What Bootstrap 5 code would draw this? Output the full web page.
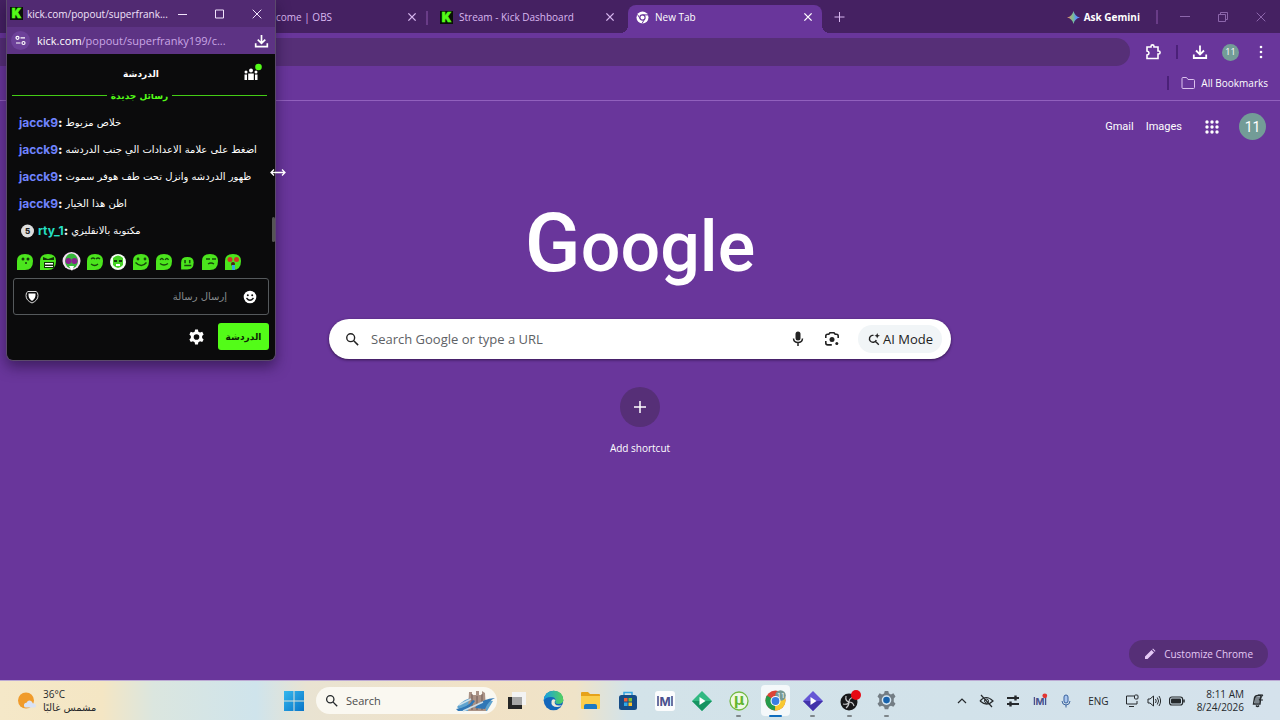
<!DOCTYPE html>
<html lang="en">
<head>
<meta charset="utf-8">
<meta name="viewport" content="width=device-width, initial-scale=1">
<title>New Tab</title>
<link href="https://cdn.jsdelivr.net/npm/bootstrap@5.3.0/dist/css/bootstrap.min.css" rel="stylesheet">
<style>
  :root { --violet:#69369b; --strip:#452162; --field:#562f77; --lilac:#d9b8f0; }
  body { font-family:"Noto Sans","DejaVu Sans",sans-serif; font-size:10px; line-height:16px; background:var(--violet); color:#fff; overflow:hidden; }
  svg { display:block; flex:none; }
  button { background:none; border:0; padding:0; color:inherit; line-height:inherit; }
  a { color:inherit; text-decoration:none; }
  .ui { font-family:"Open Sans","DejaVu Sans",sans-serif; }

  /* tab strip */
  .strip { background:var(--strip); height:33px; padding-left:276px; color:var(--lilac); }
  .tab-item { height:28px; width:194px; padding:0 8px; gap:6px; }
  .tab-first { width:150px; padding-left:0; }
  .tab-mid { width:200px; padding:0 12px; }
  .tab-item.on { background:var(--violet); color:#fff; border-radius:8px 8px 0 0; position:relative; }
  .tab-item.on::before, .tab-item.on::after { content:""; position:absolute; bottom:0; width:8px; height:8px; }
  .tab-item.on::before { right:100%; background:radial-gradient(circle at 0 0, transparent 8px, var(--violet) 8px); }
  .tab-item.on::after { left:100%; background:radial-gradient(circle at 100% 0, transparent 8px, var(--violet) 8px); }
  .sep { width:2px; height:14px; background:#693c87; }
  .sep.deep { background:#4b2178; }
  .caption-set { gap:28px; padding:0 14px 0 22px; color:#8c66ab; }

  /* toolbar and bookmarks */
  .toolbar { height:38px; padding:0 15px 0 0; gap:14px; }
  .omni { height:28px; border:0; background:var(--field); border-radius:0 14px 14px 0; color:#fff; padding:0 12px 0 290px; outline:0; }
  .round { border-radius:50%; background:#739c97; color:#fff; display:flex; align-items:center; justify-content:center; }
  .avatar-s { width:17px; height:17px; font-size:9px; }
  .avatar-l { width:27px; height:27px; font-size:14px; font-family:Roboto,sans-serif; }
  .bookmarks { height:30px; gap:12px; padding:0 12px 6px; border-bottom:1px solid #9160bd; }
  .bookmarks a { gap:6px; }

  /* page */
  .ntp { padding:12px; }
  .account { gap:12px; padding-right:2px; font-family:Roboto,sans-serif; font-size:11px; }
  .grid-btn { margin:0 6px 0 9px; }
  .wordmark { font-family:Roboto,sans-serif; font-weight:500; font-size:70px; line-height:80px; margin:63px 0 0; }
  .wordmark::first-letter { font-size:82px; }
  .searchbox { width:622px; max-width:100%; height:40px; border-radius:20px; background:#fff; margin-top:32px; padding:0 9px 0 16px; color:#222; box-shadow:0 1px 3px #35164f; }
  .searchbox input { border:0; outline:0; background:none; font-size:13px; min-width:0; padding:0 0 0 12px; }
  .searchbox input::placeholder { color:#5d6165; opacity:1; }
  .search-tools { gap:18px; margin-right:18px; }
  .ai { height:28px; border-radius:14px; background:#f1f5f7; padding:0 9px; gap:3px; font-size:13px; }
  .plus { width:40px; height:40px; border-radius:50%; background:var(--field); }
  .shortcut { margin-top:28px; gap:13px; }
  .custom { background:var(--field); border-radius:14px; height:28px; padding:0 15px; gap:8px; color:#e5c9f5; }

  /* chat window */
  .popout { position:absolute; left:6px; top:0; width:270px; height:361px; background:#0b0b0c; border:1px solid #5b4a6b; border-top:0; border-radius:0 0 7px 7px; box-shadow:0 6px 14px rgba(20,5,40,.5); }
  .pop-title { height:27px; background:#512a72; padding:0 13px 0 3px; gap:4px; color:#f1e3fb; }
  .pop-buttons { gap:28px; }
  .pop-url { height:27px; background:#5d3384; padding:0 6px 0 4px; gap:7px; font-size:11px; color:#c9a6e4; }
  .site { width:19px; height:19px; border-radius:50%; background:#6d4199; display:flex; align-items:center; justify-content:center; }
  .chat-head { height:40px; padding:0 15px; }
  .newmsg { height:15px; overflow:hidden; padding:0 8px 0 5px; gap:4px; color:#53fc18; line-height:5px; }
  .newmsg hr { margin:1px 0 0; border:0; height:1px; background:#53fc18; opacity:.8; }
  .chat-list { height:139px; padding:0 12px; position:relative; }
  .msg { height:27px; gap:3px; }
  .nick { font-family:Inter,sans-serif; font-weight:700; font-size:12px; color:#6f83ff; }
  .nick.teal { color:#25e0c6; }
  .nick b { color:#fff; }
  .arab { font-family:"DejaVu Sans",sans-serif; font-size:10px; white-space:nowrap; }
  .arab.strong { font-size:9px; font-weight:700; }
  .thumb { position:absolute; right:0; bottom:6px; width:3px; height:25px; background:#555; border-radius:2px; }
  .emotes { height:27px; padding:0 9px; gap:5px; }
  .composer { height:37px; margin:3px 6px 0; border:1px solid #55595c; border-radius:3px; padding:0 11px; gap:16px; }
  .composer input { background:none; border:0; outline:0; min-width:0; padding:0; color:#fff; }
  .composer input::placeholder { color:#878b8e; opacity:1; }
  .actions { gap:14px; padding-right:6px; }
  .send { background:#53fc18; color:#0b2503; height:27px; width:51px; border-radius:3px; }
  .cursor { position:absolute; left:263px; top:167px; }

  /* taskbar */
  .taskbar { height:40px; color:#25292c; border-top:1px solid #bca9d4; background:linear-gradient(90deg,#f5e8c8 0,#f4e6c4 8%,#dbe6df 12%,#cfe4ec 20%,#e9e3d2 24%,#f1e2c6 38%,#efe3c8 45%,#d3e3e9 49%,#d2e2ea 75%,#d5e2ec 100%); }
  .weather { width:275px; padding-left:17px; gap:6px; line-height:13px; }
  .apps .app { width:37px; height:36px; position:relative; display:flex; align-items:center; justify-content:center; }
  .app.run::after { content:""; position:absolute; bottom:2px; width:5px; height:2px; border-radius:1px; background:#7e868a; }
  .app.cur::after { width:13px; background:#0f6cbd; }
  .app.cur .plate { background:#f4f8fa; border-radius:4px; padding:5px 4px; }
  .find { width:181px; height:27px; border-radius:14px; background:#faf8f1; padding:0 0 0 9px; gap:8px; margin:0 1px 0 4px; }
  .find input { border:0; outline:0; background:none; min-width:0; padding:0; font-size:11px; }
  .find input::placeholder { color:#4a4b4b; opacity:1; }
  .tray { gap:12px; padding-right:16px; }
  .clock { line-height:13px; }
</style>
</head>
<body class="d-flex flex-column vh-100">
<svg width="0" height="0" class="position-absolute" aria-hidden="true">
  <defs>
    <symbol id="x" viewBox="0 0 10 10"><path d="M2 2l6 6M8 2l-6 6" stroke="currentColor" stroke-width="1.100"/></symbol>
    <symbol id="x-thin" viewBox="0 0 10 10"><path d="M.7.7l8.600 8.600M9.300 .7L.7 9.300" stroke="currentColor" stroke-width="1"/></symbol>
    <symbol id="down" viewBox="0 0 16 16"><path d="M8 1.500v8.500M4 6.500l4 4 4-4M1.800 10.500v3.500h12.400v-3.500" fill="none" stroke="currentColor" stroke-width="1.800"/></symbol>
    <symbol id="kick" viewBox="0 0 13 13"><rect width="13" height="13" fill="#081006"/><text x="6.500" y="11" text-anchor="middle" font-family="Inter" font-weight="900" font-size="12.500" fill="#53fc18" stroke="#53fc18" stroke-width=".7">K</text></symbol>
    <symbol id="lens" viewBox="0 0 16 16"><circle cx="6.500" cy="6.500" r="4.500" fill="none" stroke="currentColor" stroke-width="1.600"/><path d="M10 10l5 5" stroke="currentColor" stroke-width="1.700"/></symbol>
    <symbol id="mono" viewBox="0 0 20 20"><path d="M3 5v10M17 5v10" stroke="#48508d" stroke-width="1.600"/><text x="10" y="14.500" text-anchor="middle" font-family="Inter" font-weight="700" font-size="12" fill="#48508d">M</text></symbol>
    <symbol id="emote" viewBox="0 0 18 18"><path d="M1 17V8q0-7 8-7t8 7q0 9-8 9z" fill="#4be51d"/></symbol>
  </defs>
</svg>

<header class="ui">
  <div class="strip d-flex align-items-end">
    <div class="tab-item tab-first d-flex align-items-center pb-1"><span class="flex-grow-1">come | OBS</span><button aria-label="Close tab"><svg width="12" height="12"><use href="#x"/></svg></button></div>
    <span class="sep mb-2"></span>
    <div class="tab-item tab-mid d-flex align-items-center pb-1"><svg width="13" height="13"><use href="#kick"/></svg><span class="flex-grow-1 text-nowrap">Stream - Kick Dashboard</span><button aria-label="Close tab"><svg width="12" height="12"><use href="#x"/></svg></button></div>
    <div class="tab-item on d-flex align-items-center pb-1">
      <svg width="13" height="13" viewBox="0 0 13 13"><circle cx="6.500" cy="6.500" r="6" fill="#fff"/><circle cx="6.500" cy="6.500" r="2.600" fill="none" stroke="#69369b" stroke-width="1.100"/><path d="M6.500 3.900h5.500M4.200 7.800L1.500 3.500M8.800 7.800L6 12.500" stroke="#69369b"/></svg>
      <span class="flex-grow-1">New Tab</span><button aria-label="Close tab"><svg width="12" height="12"><use href="#x"/></svg></button>
    </div>
    <button class="mb-2 ms-2 ps-1" aria-label="New tab"><svg width="11" height="16" viewBox="0 0 11 16"><path d="M5.500 3v10M.5 8h10" stroke="currentColor"/></svg></button>
    <div class="d-flex align-items-center ms-auto mb-2">
      <button class="d-flex align-items-center gap-1 text-white fw-bold"><svg width="13" height="13" viewBox="0 0 13 13"><defs><linearGradient id="gem"><stop stop-color="#f0826e"/><stop offset=".45" stop-color="#7bc08e"/><stop offset=".7" stop-color="#5c93f7"/></linearGradient></defs><path d="M6.500 0q1.200 5.300 6.500 6.500Q7.700 7.700 6.500 13 5.300 7.700 0 6.500 5.300 5.300 6.500 0z" fill="url(#gem)"/></svg>Ask Gemini</button>
      <span class="sep ms-3"></span>
      <div class="caption-set d-flex align-items-center">
        <button aria-label="Minimize"><svg width="10" height="10" viewBox="0 0 10 10"><path d="M0 4.500h10" stroke="currentColor"/></svg></button>
        <button aria-label="Restore"><svg width="10" height="10" viewBox="0 0 10 10"><path d="M.5 2.500h7v7h-7zM2.500 2.500v-2h7v7h-2" fill="none" stroke="currentColor"/></svg></button>
        <button aria-label="Close"><svg width="10" height="10"><use href="#x-thin"/></svg></button>
      </div>
    </div>
  </div>
  <div class="toolbar d-flex align-items-center">
    <input class="omni flex-grow-1" aria-label="Address bar">
    <button aria-label="Extensions"><svg width="18" height="18" viewBox="0 0 18 18"><path d="M3 4h4v-.6a1.500 1.500 0 013 0V4h4v4h.6a1.500 1.500 0 010 3H14v4.500H3V12q2-.3 2-2t-2-2z" fill="none" stroke="currentColor" stroke-width="1.600"/></svg></button>
    <span class="sep deep"></span>
    <button aria-label="Downloads"><svg width="16" height="16"><use href="#down"/></svg></button>
    <button class="round avatar-s" aria-label="Profile">11</button>
    <button class="ps-1" aria-label="Menu"><svg width="8" height="16" viewBox="0 0 8 16"><g fill="#fff"><circle cx="4" cy="3" r="1.300"/><circle cx="4" cy="8" r="1.300"/><circle cx="4" cy="13" r="1.300"/></g></svg></button>
  </div>
  <div class="bookmarks d-flex align-items-center justify-content-end">
    <span class="sep deep"></span>
    <a href="#" class="d-flex align-items-center text-nowrap"><svg width="14" height="12" viewBox="0 0 14 12"><path d="M1 1.500q0-1 1-1h3.500l1.500 2h5.500q1 0 1 1v7q0 1-1 1H2q-1 0-1-1z" fill="none" stroke="#dcc1ee"/></svg>All Bookmarks</a>
  </div>
</header>

<main class="ntp flex-grow-1 d-flex flex-column">
  <nav class="account d-flex align-items-center justify-content-end">
    <a href="#">Gmail</a><a href="#">Images</a>
    <button aria-label="Google apps" class="grid-btn"><svg width="18" height="18" viewBox="0 0 18 18"><g fill="#fff"><circle cx="4" cy="4" r="1.700"/><circle cx="9" cy="4" r="1.700"/><circle cx="14" cy="4" r="1.700"/><circle cx="4" cy="9" r="1.700"/><circle cx="9" cy="9" r="1.700"/><circle cx="14" cy="9" r="1.700"/><circle cx="4" cy="14" r="1.700"/><circle cx="9" cy="14" r="1.700"/><circle cx="14" cy="14" r="1.700"/></g></svg></button>
    <button class="round avatar-l" aria-label="Account">11</button>
  </nav>
  <div class="d-flex flex-column align-items-center">
    <h1 class="wordmark">Google</h1>
    <div class="searchbox d-flex align-items-center">
      <svg width="14" height="14" viewBox="0 0 16 16"><use href="#lens"/></svg>
      <input class="flex-grow-1 ui" placeholder="Search Google or type a URL" aria-label="Search Google or type a URL">
      <div class="search-tools d-flex align-items-center">
        <button aria-label="Voice search"><svg width="16" height="18" viewBox="0 0 16 18"><rect x="5.500" y="1.500" width="5" height="9" rx="2.500" fill="#222"/><path d="M3.500 8.500q.3 4 4.500 4t4.500-4M8 12.500V16" fill="none" stroke="#222" stroke-width="1.500"/></svg></button>
        <button aria-label="Image search"><svg width="16" height="16" viewBox="0 0 16 16"><path d="M1.800 7V5q0-1.700 1.700-1.700h1.300L6 1.800h4l1.200 1.500h1.300q1.700 0 1.700 1.700v2M1.800 10v2q0 1.900 2 1.900h4" fill="none" stroke="#222" stroke-width="1.600"/><circle cx="8" cy="8.500" r="2.500" fill="#222"/><circle cx="12.800" cy="12.600" r="1.500" fill="#222"/></svg></button>
      </div>
      <button class="ai ui d-flex align-items-center text-nowrap"><svg width="13" height="13" viewBox="0 0 14 14"><path d="M7 2.500H5.500a3.800 3.800 0 104.500 5M8.700 8.700l4 4" fill="none" stroke="#222" stroke-width="1.500"/><path d="M11 0q.3 2.700 3 3-2.700.3-3 3-.3-2.700-3-3 2.700-.3 3-3z" fill="#222"/></svg>AI Mode</button>
    </div>
    <a href="#" class="shortcut ui d-flex flex-column align-items-center">
      <span class="plus d-flex align-items-center justify-content-center"><svg width="14" height="14" viewBox="0 0 14 14"><path d="M7 1v12M1 7h12" stroke="#fff" stroke-width="1.500"/></svg></span>
      Add shortcut
    </a>
  </div>
  <button class="custom ui d-flex align-items-center mt-auto ms-auto"><svg width="12" height="12" viewBox="0 0 12 12"><path d="M1 11V8.500L7.500 2 10 4.500 3.500 11zM8.300 1.200L9 .5l2.500 2.500-.7.700z" fill="currentColor"/></svg>Customize Chrome</button>
</main>

<footer class="taskbar ui d-flex align-items-center">
  <div class="weather d-flex align-items-center">
    <svg width="20" height="20" viewBox="0 0 20 20"><circle cx="9" cy="9.500" r="8" fill="#f09b2b"/><path d="M7 15q-.5-3 2.500-3.300Q11 9 13.500 9.800q2 .5 2.200 2.500Q19 12.500 19 15q0 1.500-2 1.500H9Q7 16.500 7 15z" fill="#d8e2f6"/></svg>
    <div><div>36°C</div><div class="arab" dir="rtl" lang="ar">مشمس غالبًا</div></div>
  </div>
  <div class="apps d-flex align-items-center">
    <button class="app" aria-label="Start"><svg width="20" height="20" viewBox="0 0 20 20"><defs><linearGradient id="win" x2="1" y2="1"><stop stop-color="#35b8ee"/><stop offset="1" stop-color="#0874c8"/></linearGradient></defs><path d="M0 0h9.500v9.500H0zM10.500 0H20v9.500h-9.500zM0 10.500h9.500V20H0zM10.500 10.500H20V20h-9.500z" fill="url(#win)"/></svg></button>
    <div class="find d-flex align-items-center">
      <svg width="13" height="13" viewBox="0 0 16 16"><use href="#lens"/></svg>
      <input class="flex-grow-1" placeholder="Search" aria-label="Search">
      <svg width="42" height="24" viewBox="0 0 42 24"><path d="M2 18Q10 8 20 9l18 3-6 10H6z" fill="#5fa3cf"/><path d="M14 3h3v3h4V2h3v4h3V2l3 2 1 18H13z" fill="#aa9285"/><path d="M17 5v16M22 7v14M27 5v16" stroke="#705d57"/><path d="M1 20Q12 19 18 11l2 1Q13 23 3 22zM20 19Q28 9 40 9q-7 3-10 11z" fill="#3077b6"/><path d="M4 16l12-6M8 22l20-9" stroke="#c9deea" stroke-width="1.500"/></svg>
    </div>
    <button class="app" aria-label="Task view"><svg width="20" height="20" viewBox="0 0 20 20"><path d="M5 1h14v13H5z" fill="#f3f3f3"/><path d="M1 6h14v12H1z" fill="#252525"/><path d="M5 6h10v8H5z" fill="#a6a6a6"/></svg></button>
    <button class="app" aria-label="Edge"><svg width="21" height="21" viewBox="0 0 21 21"><defs><linearGradient id="edge" x2="1"><stop stop-color="#159de5"/><stop offset="1" stop-color="#55d35b"/></linearGradient></defs><circle cx="10.500" cy="10.500" r="9.800" fill="#1467bb"/><path d="M.7 11Q1 1 11 .7q9 .3 9.300 9.300-.3 4-5 4-4-.2-2.800-3Q13 7 8 7 2 7 .7 11z" fill="url(#edge)"/><path d="M12.500 10q-3-2-4 1-1 6 6 6 3 0 4.500-2-5 1.500-7-1-1-2 .5-4z" fill="#f1ead7"/></svg></button>
    <button class="app" aria-label="File Explorer"><svg width="21" height="20" viewBox="0 0 21 20"><path d="M1 2q0-1 1-1h6l2 2h9q1 0 1 1v3H1z" fill="#e6a21a"/><path d="M1 5h19v12q0 1-1 1H2q-1 0-1-1z" fill="#fbce4c"/><path d="M4 18v-3q0-2 2-2h9q2 0 2 2v3z" fill="#1a79c4"/></svg></button>
    <button class="app" aria-label="Store"><svg width="20" height="20" viewBox="0 0 20 20"><path d="M6 5V1.500h8V5" fill="none" stroke="#35a5e3" stroke-width="1.500"/><rect x="1" y="4" width="18" height="15" rx="2.500" fill="#164c86"/><path d="M6 7h3.500v3.500H6z" fill="#f15b35"/><path d="M10.500 7H14v3.500h-3.500z" fill="#80bf38"/><path d="M6 11.500h3.500V15H6z" fill="#30a9e8"/><path d="M10.500 11.500H14V15h-3.500z" fill="#ffc229"/></svg></button>
    <button class="app" aria-label="Monitor"><svg width="20" height="20" viewBox="0 0 20 20"><rect width="20" height="20" rx="3" fill="#fbfcfd"/><use href="#mono"/></svg></button>
    <button class="app" aria-label="Player"><svg width="20" height="20" viewBox="0 0 20 20"><path d="M10 0l10 10-10 10L0 10z" fill="#31b982"/><path d="M10 20L0 10h20z" fill="#179462"/><path d="M7.500 6v8l6-4z" fill="#fff"/></svg></button>
    <button class="app run" aria-label="Torrent"><svg width="20" height="20" viewBox="0 0 20 20"><circle cx="10" cy="10" r="9" fill="#eff8e5" stroke="#72ba43" stroke-width="1.300"/><text x="10" y="14" text-anchor="middle" font-family="Inter" font-weight="700" font-size="16" fill="#63b62f">µ</text></svg></button>
    <button class="app run cur" aria-label="Chrome"><span class="plate"><svg width="21" height="21" viewBox="0 0 21 21"><circle cx="10.500" cy="10.500" r="10" fill="#dc4437"/><path d="M10.500 10.500L1.800 5.500A10 10 0 0010 20.500z" fill="#259b4b"/><path d="M10.500 10.500L10 20.500a10 10 0 0010-13z" fill="#f8c931"/><circle cx="15.500" cy="5.500" r="5.300" fill="#769994"/><circle cx="10.500" cy="11" r="5" fill="#fff"/><circle cx="10.500" cy="11" r="3.900" fill="#3a7ee3"/><text x="16" y="7.500" text-anchor="middle" font-family="Roboto" font-size="7" fill="#fff">11</text></svg></span></button>
    <button class="app run" aria-label="Clips"><svg width="20" height="20" viewBox="0 0 20 20"><path d="M10 0l10 10-10 10L0 10z" fill="#6556d5"/><path d="M10 20L0 10h20z" fill="#4333aa"/><path d="M7.500 6v8l6-4z" fill="#fff"/></svg></button>
    <button class="app run" aria-label="OBS"><svg width="24" height="24" viewBox="0 0 24 24"><circle cx="11" cy="13" r="8.500" fill="#17181a"/><g fill="none" stroke="#c7c9cb" stroke-width="1.200"><path d="M8 7q-1 5 3 6 4 0 5 4M16 8q-5 1-5 5M5 15q5 1 6-2M11 13q0 4-3 6"/></g><circle cx="18" cy="6" r="5" fill="#e70914"/></svg></button>
    <button class="app run" aria-label="Settings"><svg width="21" height="21" viewBox="0 0 24 24"><path d="M10 1h4l.8 3 2.300 1 2.800-1.200 2.400 3.500-2 2.400v3.600l2 2.400-2.400 3.500-2.800-1.200-2.300 1-.8 3h-4l-.8-3-2.300-1-2.800 1.200-2.400-3.500 2-2.400V9.700l-2-2.400 2.400-3.500L6.900 5l2.300-1z" fill="#737d84"/><circle cx="12" cy="11.500" r="5.500" fill="#d6e7f3"/><circle cx="12" cy="11.500" r="3.800" fill="#1763ad"/></svg></button>
  </div>
  <div class="tray d-flex align-items-center ms-auto">
    <button aria-label="Hidden icons"><svg width="10" height="14" viewBox="0 0 10 14"><path d="M1 9l4-4 4 4" fill="none" stroke="currentColor" stroke-width="1.200"/></svg></button>
    <svg width="15" height="14" viewBox="0 0 15 14"><path d="M1 7q6-7 13 0-6 6-13 0M2 1l11 12" fill="none" stroke="currentColor" stroke-width="1.200"/><circle cx="7.500" cy="7" r="2" fill="none" stroke="currentColor"/></svg>
    <svg width="14" height="14" viewBox="0 0 14 14"><path d="M1 4h12M1 10h12" stroke="currentColor" stroke-width="1.800"/><path d="M9.500 1.500v5M4.500 7.500v5" stroke="currentColor" stroke-width="2.400"/></svg>
    <svg width="16" height="16" viewBox="0 0 20 20"><use href="#mono"/><circle cx="16" cy="3.500" r="3" fill="#e33532"/></svg>
    <svg width="12" height="14" viewBox="0 0 12 14"><rect x="4" y="1" width="4" height="8" rx="2" fill="#a9c6ef" stroke="#38619d"/><path d="M2 7q.3 4 4 4t4-4M6 11v2.500" fill="none" stroke="#38619d"/></svg>
    <span class="mx-1">ENG</span>
    <div class="d-flex align-items-center gap-2">
      <svg width="14" height="14" viewBox="0 0 14 14"><path d="M9 2H1.500v8H12V7M4 12.500h5" fill="none" stroke="currentColor"/><rect x="9.500" y="1" width="3.500" height="4" rx="1" fill="none" stroke="currentColor"/></svg>
      <svg width="14" height="14" viewBox="0 0 14 14"><path d="M1 5v4h2l3.500 3V2L3 5zM8.500 5q1.500 2 0 4M10.300 3.500q2.500 3.500 0 7M12 2q3.200 5 0 10" fill="none" stroke="currentColor"/></svg>
      <svg width="16" height="14" viewBox="0 0 16 14"><rect x=".6" y="3" width="13" height="8" rx="2.200" fill="none" stroke="currentColor" stroke-width="1.200"/><rect x="2" y="4.500" width="10" height="5" rx="1" fill="currentColor"/><path d="M15 5.500v3" stroke="currentColor" stroke-width="1.500"/></svg>
    </div>
    <div class="d-flex align-items-center gap-2">
      <div class="clock text-end">8:11 AM<br>8/24/2026</div>
      <button aria-label="Notifications"><svg width="12" height="14" viewBox="0 0 12 14"><path d="M1.500 10l1-6q.5-2.500 3.500-2.500h3l-1 8.500zM4 11.500q1.500 2 3 0" fill="none" stroke="currentColor" stroke-width="1.400"/><path d="M3 4h6M3 6h5M3 8h5" stroke="currentColor"/><path d="M6 1h5L7 6h4" fill="none" stroke="currentColor"/></svg></button>
    </div>
  </div>
</footer>

<section class="popout d-flex flex-column" aria-label="Chat window">
  <div class="pop-title ui d-flex align-items-center"><svg width="13" height="13"><use href="#kick"/></svg><span class="flex-grow-1 text-nowrap">kick.com/popout/superfrank...</span>
    <div class="pop-buttons d-flex align-items-center">
      <button aria-label="Minimize"><svg width="9" height="10" viewBox="0 0 9 10"><path d="M0 5.500h9" stroke="currentColor"/></svg></button>
      <button aria-label="Maximize"><svg width="9" height="10" viewBox="0 0 9 10"><path d="M.5 1h8v8h-8z" fill="none" stroke="currentColor"/></svg></button>
      <button aria-label="Close"><svg width="10" height="10"><use href="#x-thin"/></svg></button>
    </div>
  </div>
  <div class="pop-url ui d-flex align-items-center"><span class="site"><svg width="11" height="11" viewBox="0 0 11 11"><g fill="none" stroke="#fff" stroke-width="1.200"><circle cx="2.500" cy="2.800" r="1.500"/><path d="M5.500 2.800H10M1 8h4.500"/><circle cx="8.500" cy="8" r="1.500"/></g></svg></span><span class="flex-grow-1 text-nowrap"><span class="text-white">kick.com</span>/popout/superfranky199/c...</span><button class="text-white" aria-label="Install"><svg width="15" height="16" viewBox="0 0 16 16"><use href="#down"/></svg></button></div>
  <div class="chat-head d-flex align-items-center justify-content-center position-relative">
    <span class="arab strong" dir="rtl" lang="ar">الدردشة</span>
    <button class="position-absolute end-0 me-2 pe-1" aria-label="Viewers"><svg width="20" height="22" viewBox="0 0 20 22"><g fill="#fff"><circle cx="3" cy="9" r="1.500"/><circle cx="8" cy="7.500" r="2"/><circle cx="13" cy="9" r="1.500"/><path d="M1.500 11.500H4V17H1.500zM5.200 10.500h5.600V17H5.200zM12 11.500h2.500V17H12z"/></g><circle cx="15.500" cy="4" r="3.300" fill="#53fc18"/></svg></button>
  </div>
  <div class="newmsg d-flex align-items-start"><hr class="flex-grow-1"><span class="arab strong" dir="rtl" lang="ar">رسائل جديدة</span><hr class="flex-grow-1"></div>
  <div class="chat-list">
    <div class="msg d-flex align-items-center"><span class="nick">jacck9<b>:</b></span><span class="arab" dir="rtl" lang="ar">خلاص مزبوط</span></div>
    <div class="msg d-flex align-items-center"><span class="nick">jacck9<b>:</b></span><span class="arab" dir="rtl" lang="ar">اضغط على علامة الاعدادات الي جنب الدردشه</span></div>
    <div class="msg d-flex align-items-center"><span class="nick">jacck9<b>:</b></span><span class="arab" dir="rtl" lang="ar">ظهور الدردشه وانزل تحت طف هوفر سموث</span></div>
    <div class="msg d-flex align-items-center"><span class="nick">jacck9<b>:</b></span><span class="arab" dir="rtl" lang="ar">اظن هذا الخيار</span></div>
    <div class="msg d-flex align-items-center"><svg width="16" height="14" viewBox="0 0 16 14"><circle cx="8.500" cy="7" r="6.500" fill="#dedede"/><text x="8.500" y="10" text-anchor="middle" font-family="Inter" font-weight="800" font-size="8" fill="#222">5</text></svg><span class="nick teal">rty_1<b>:</b></span><span class="arab" dir="rtl" lang="ar">مكتوبة بالانقليزي</span></div>
    <span class="thumb"></span>
  </div>
  <div class="emotes d-flex align-items-center">
    <svg width="18" height="18"><use href="#emote"/><g fill="#153b0b"><circle cx="7" cy="6" r="1.500"/><circle cx="12" cy="6" r="1.500"/><circle cx="10" cy="10" r="1"/></g></svg>
    <svg width="18" height="18"><use href="#emote"/><path d="M4 4l5 2 6-2v3H4zM5 9h10v6H5z" fill="#123308"/><path d="M6 10h8v1.500H6zM6 13h8v1H6z" fill="#fff"/></svg>
    <svg width="19" height="19" viewBox="0 0 19 19"><circle cx="9.500" cy="9" r="9" fill="#f4dff4"/><ellipse cx="9.500" cy="9" rx="6.500" ry="7.500" fill="#36b63b"/><circle cx="6.500" cy="9" r="3" fill="#892090"/><circle cx="12.500" cy="9" r="3" fill="#892090"/><path d="M7 14h5l-2 5z" fill="#fff"/></svg>
    <svg width="18" height="18"><use href="#emote"/><path d="M5 6q2-2 4 0M10 6q2-2 4 0M5 11q4 3 7 0" fill="none" stroke="#174b0a" stroke-width="1.300"/></svg>
    <svg width="18" height="18"><circle cx="9" cy="9" r="8" fill="#f6fff4"/><path d="M4 5q5-5 10 0v7q-5 6-10 0z" fill="#44d323"/><path d="M5 8h3M10 8h3" stroke="#153b0b" stroke-width="2"/><path d="M7 12h4" stroke="#fff" stroke-width="2"/></svg>
    <svg width="18" height="18"><use href="#emote"/><path d="M3.500 9.500q6 6 11 0" fill="none" stroke="#174b0a" stroke-width="1.500"/><circle cx="6" cy="6" r="1.400" fill="#174b0a"/><circle cx="13" cy="6" r="1.400" fill="#174b0a"/></svg>
    <svg width="18" height="18"><use href="#emote"/><path d="M5 7q2-3 3.500 0M10 7q2-3 3.500 0M5 10.500q4 3 8 0" fill="none" stroke="#174b0a" stroke-width="1.300"/></svg>
    <svg width="18" height="18" viewBox="-3 -4 23 23"><use href="#emote" width="18" height="18"/><path d="M6 5v4M12 5v4M5 12h9" stroke="#174b0a" stroke-width="2"/></svg>
    <svg width="18" height="18"><use href="#emote"/><path d="M5 6h4M11 6h4M7 11q3-2 6 0" fill="none" stroke="#174b0a" stroke-width="1.500"/></svg>
    <svg width="18" height="18"><use href="#emote"/><circle cx="6" cy="6.500" r="2.500" fill="#cf3525"/><circle cx="12.500" cy="6.500" r="2.500" fill="#cf3525"/><circle cx="9" cy="11" r="2" fill="#4b270c"/><path d="M8 12h3v5H8z" fill="#38a9d8"/></svg>
  </div>
  <div class="composer d-flex align-items-center">
    <svg width="14" height="14" viewBox="0 0 14 14"><path d="M3 1.500h8q2 .5 2 4 0 5-6 7.500-6-2.500-6-7.500 0-3.500 2-4z" fill="none" stroke="#ddd"/><path d="M3.500 3.500h7q.5 5-3.500 7.500-4-2.500-3.500-7.500z" fill="#fff"/></svg>
    <input class="flex-grow-1 arab" dir="rtl" lang="ar" placeholder="إرسال رسالة" aria-label="إرسال رسالة">
    <button aria-label="Emoji"><svg width="14" height="14" viewBox="0 0 14 14"><circle cx="7" cy="7" r="6.300" fill="#fff"/><circle cx="4.800" cy="5.300" r="1" fill="#111"/><circle cx="9.200" cy="5.300" r="1" fill="#111"/><path d="M3.500 8q3.500 4.500 7 0" fill="none" stroke="#111" stroke-width="1.300"/></svg></button>
  </div>
  <div class="actions d-flex align-items-center justify-content-end mt-2">
    <button aria-label="Settings"><svg width="15" height="16" viewBox="0 0 16 16"><path d="M6.500 0h3l.5 2.300 1.800 1 2.300-.8 1.500 2.700L14 7v2l1.600 1.700-1.500 2.700-2.300-.8-1.800 1-.5 2.400h-3L6 13.600l-1.800-1-2.300.8L.4 10.700 2 9V7L.4 5.200l1.500-2.700 2.300.8 1.800-1zM8 5a3 3 0 100 6 3 3 0 000-6z" fill="#fff" fill-rule="evenodd"/></svg></button>
    <button class="send arab strong" dir="rtl" lang="ar">الدردشة</button>
  </div>
  <svg class="cursor" width="16" height="11" viewBox="0 0 16 11"><path d="M1 5.500h14M4 2.500l-3 3 3 3M12 2.500l3 3-3 3" fill="none" stroke="#fff" stroke-width="1.300"/></svg>
</section>
<script src="https://cdn.jsdelivr.net/npm/bootstrap@5.3.0/dist/js/bootstrap.bundle.min.js"></script>
</body>
</html>
